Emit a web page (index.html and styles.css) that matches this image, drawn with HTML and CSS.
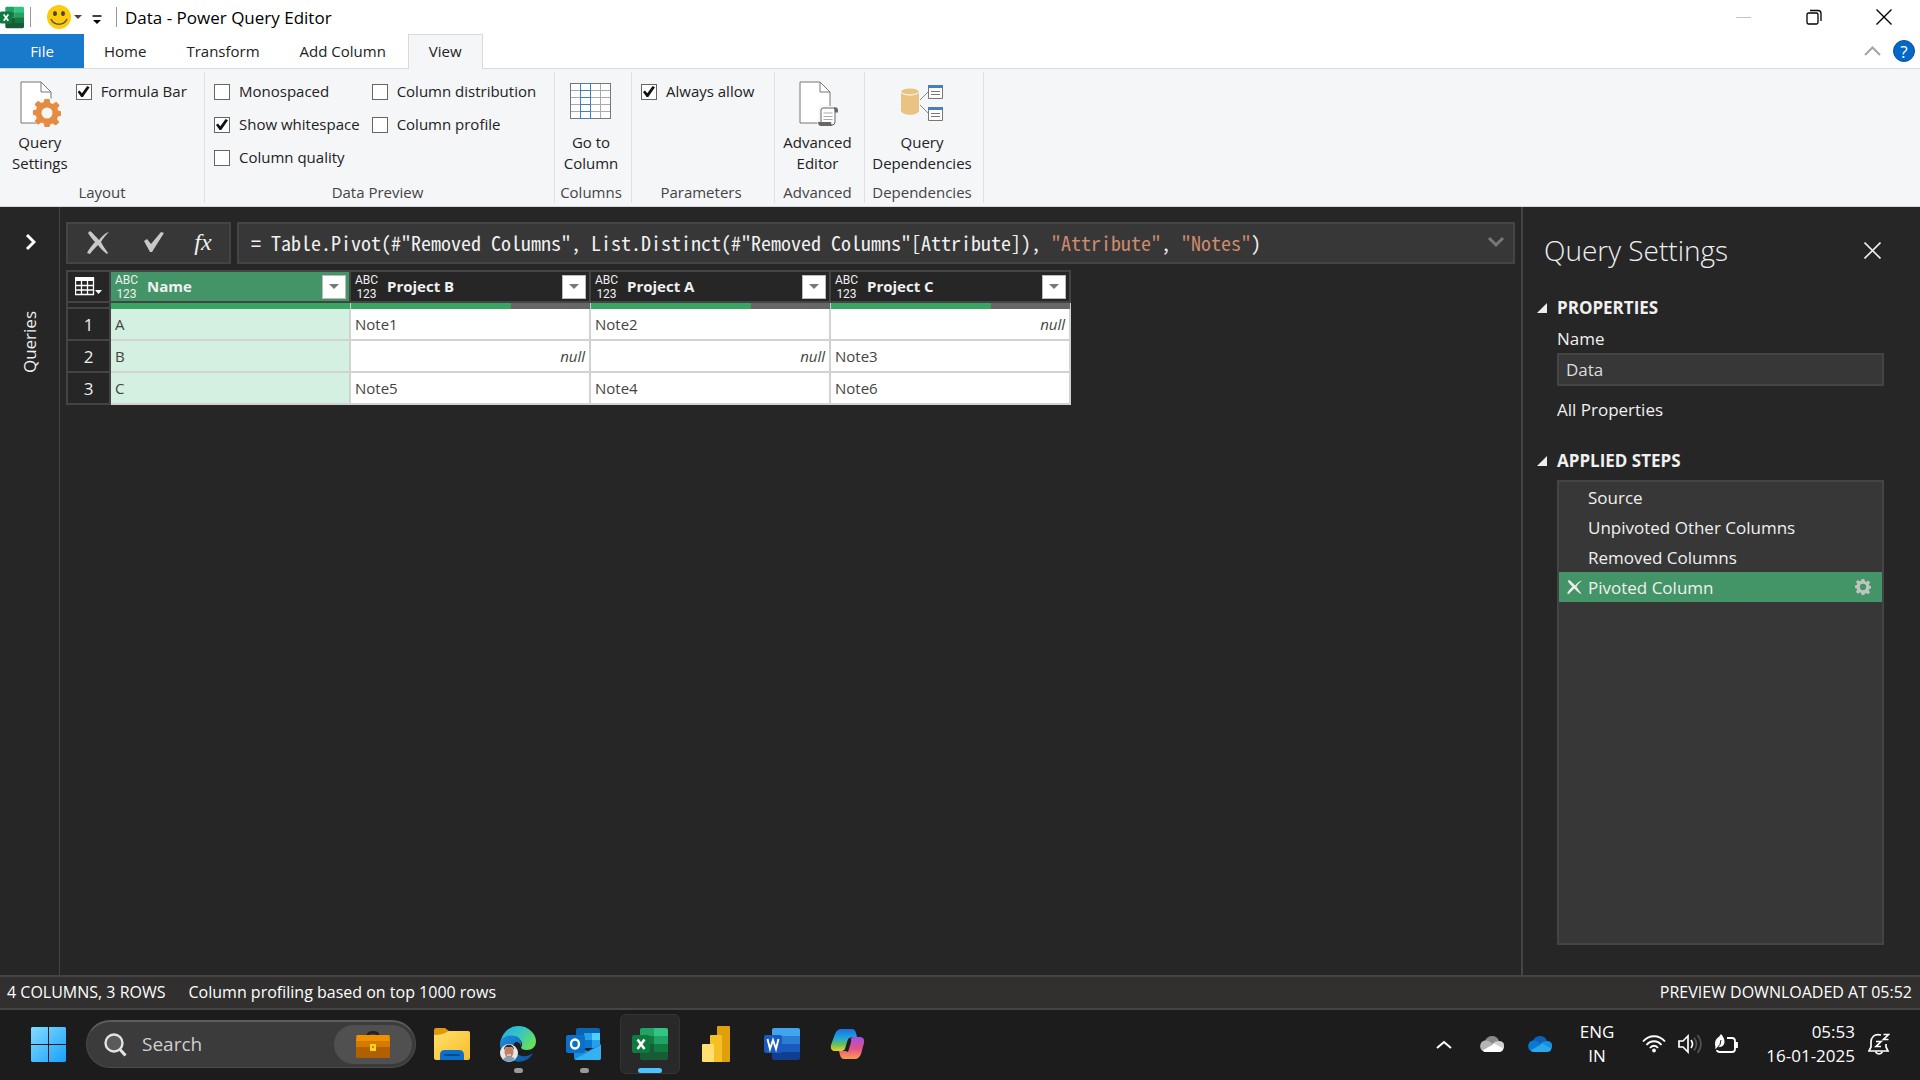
FILE: index.html
```html
<!DOCTYPE html>
<html lang="en">
<head>
  <meta charset="UTF-8">
  <meta name="viewport" content="width=device-width, initial-scale=1.0">
  <title>Data - Power Query Editor</title>
  <link rel="stylesheet" href="styles.css">
</head>
<body>
<!-- shared symbols -->
<svg class="defs" width="0" height="0" aria-hidden="true">
  <symbol id="excel" viewBox="0 0 36 34">
    <path fill="#21a366" d="M10 1h12v8H8V3q0-2 2-2z"/>
    <path fill="#33c481" d="M22 1h12q2 0 2 2v6H22z"/>
    <path fill="#107c41" d="M8 9h14v8H8z"/>
    <path fill="#21a366" d="M22 9h14v8H22z"/>
    <path fill="#185c37" d="M8 17h28v14q0 2-2 2H10q-2 0-2-2z"/>
    <path fill="#107c41" d="M22 17h14v8H22z"/>
    <rect x="0" y="8" width="18" height="18" rx="2" fill="#0f7a40"/>
    <path stroke="#fff" stroke-width="2.6" fill="none" d="M5.500 12.500l7 9.500M12.500 12.500l-7 9.500"/>
  </symbol>
  <symbol id="gear" viewBox="0 0 28 28">
    <path fill="currentColor" fill-rule="evenodd" d="M11.500 0h5l.8 4 2.500 1 3.400-2.300 3.400 3.500L24.400 9.500l1 2.300 2.600.500v4.500l-3 .700-1 2.400 2.300 3.300-3.500 3.400-3.200-2.200-2.400 1L16.500 28h-5l-.8-3.500-2.400-1-3.300 2.200-3.400-3.500 2.200-3.300-1-2.400L0 15.800v-4.500l3-.600 1-2.200L1.600 5.200 5 1.800 8.300 4l2.400-1zM14 8.500a5.500 5.500 0 1 0 0 11 5.500 5.500 0 0 0 0-11z"/>
  </symbol>
  <symbol id="cross" viewBox="0 0 16 16">
    <path stroke="currentColor" fill="none" d="M0.500 0.500l15 15M15.500 0.500l-15 15"/>
  </symbol>
  <symbol id="brush-cross" viewBox="0 0 22 23">
    <path fill="currentColor" d="M3 0c3 2 6 6 9 9 3-4 6-7 10-8-3 3-6 6-8 10 2 4 5 8 7 11l-1 1c-4-3-7-6-9-9-3 3-6 6-8 9l-3-1c2-4 5-8 8-11C5 8 3 5 1 2z"/>
  </symbol>
  <symbol id="cloud" viewBox="0 0 24 16">
    <path class="cloud-top" d="M5 5c2-6 12-7 14 0l-8 3z"/>
    <path class="cloud-left" d="M5 4.500c3 0 4 .500 8 3.500L3 15c-4-1-4-10 2-10.500z"/>
    <path class="cloud-right" d="M19 5c6 0 6 6 4 8l-11-5c2-2 4-3 7-3z"/>
    <path class="cloud-base" d="M2.500 14.500L14 7.500l9.500 5c-.5 2-2 3.500-4 3.500H6c-1.500 0-2.500-.5-3.500-1.500z"/>
  </symbol>
</svg>

<header class="titlebar">
  <svg class="app-icon" width="24" height="23"><use href="#excel"/></svg>
  <span class="divider"></span>
  <button class="smiley" aria-label="Send feedback">
    <svg width="36" height="24" viewBox="0 0 36 24">
      <circle cx="12" cy="12" r="12" fill="#fdcb0a"/>
      <ellipse cx="8" cy="8.500" rx="2" ry="2.500" fill="#444"/>
      <ellipse cx="16" cy="8.500" rx="2" ry="2.500" fill="#444"/>
      <path d="M4 14c3 7 13 7 16 0" fill="none" stroke="#555" stroke-width="1.500"/>
      <path d="M27 10h8l-4 4z" fill="#444"/>
    </svg>
  </button>
  <button class="customize" aria-label="Customize toolbar">
    <svg width="10" height="10" viewBox="0 0 10 10"><path d="M0.500 1h9" stroke="#000" stroke-width="1.500"/><path d="M1 5h8L5 9z"/></svg>
  </button>
  <span class="divider"></span>
  <span class="window-title">Data - Power Query Editor</span>
  <div class="window-buttons">
    <button aria-label="Minimize"><svg width="16" height="16"><path d="M0 8.500h15" stroke="#c4c4c4"/></svg></button>
    <button aria-label="Restore"><svg width="16" height="16" fill="none" stroke="#000" stroke-width="1.300"><rect x="1" y="4" width="11" height="11" rx="1.500"/><path d="M4 1.500h8q3 0 3 3V12"/></svg></button>
    <button aria-label="Close"><svg width="16" height="16" stroke-width="1.400"><use href="#cross"/></svg></button>
  </div>
</header>

<nav class="tabs">
  <button class="tab file">File</button>
  <button class="tab">Home</button>
  <button class="tab">Transform</button>
  <button class="tab">Add Column</button>
  <button class="tab active">View</button>
  <div class="tab-tools">
    <button aria-label="Collapse ribbon"><svg width="17" height="10"><path d="M1 9l7.500-7.500L16 9" fill="none" stroke="#a5a5a5" stroke-width="2"/></svg></button>
    <button class="help" aria-label="Help">?</button>
  </div>
</nav>

<section class="ribbon">
  <div class="group layout">
    <div class="group-body">
      <button class="big">
        <svg width="42" height="46" viewBox="0 0 42 46">
          <path d="M2 1h20l10 10v31H2z" fill="#fff" stroke="#777"/>
          <path d="M22 1v10h10" fill="none" stroke="#777"/>
          <circle cx="28" cy="32" r="15" fill="#f5f6f8"/>
          <svg x="14" y="18" width="28" height="28" color="#e58b42"><use href="#gear"/></svg>
          <circle cx="28" cy="32" r="5" fill="#f5f6f8"/>
        </svg>
        <span>Query<br>Settings</span>
      </button>
      <div class="checks">
        <label><input type="checkbox" checked>Formula Bar</label>
      </div>
    </div>
    <div class="group-name">Layout</div>
  </div>
  <div class="group preview">
    <div class="group-body">
      <div class="checks">
        <label><input type="checkbox">Monospaced</label>
        <label><input type="checkbox" checked>Show whitespace</label>
        <label><input type="checkbox">Column quality</label>
      </div>
      <div class="checks">
        <label><input type="checkbox">Column distribution</label>
        <label><input type="checkbox">Column profile</label>
      </div>
    </div>
    <div class="group-name">Data Preview</div>
  </div>
  <div class="group columns">
    <div class="group-body">
      <button class="big">
        <svg width="42" height="46" viewBox="0 0 42 46" fill="none">
          <rect x="0.500" y="2.500" width="40" height="35" fill="#fff"/>
          <path d="M1 9.500h39M1 16.500h39M1 23.500h39M1 30.500h39M30.500 3v34" stroke="#aaa"/>
          <rect x="0.500" y="2.500" width="40" height="35" stroke="#777"/>
          <path d="M10.500 2.500h10v35h-10zM11 9.500h9M11 16.500h9M11 23.500h9M11 30.500h9" stroke="#3f7fc4"/>
        </svg>
        <span>Go to<br>Column</span>
      </button>
    </div>
    <div class="group-name">Columns</div>
  </div>
  <div class="group parameters">
    <div class="group-body">
      <div class="checks">
        <label><input type="checkbox" checked>Always allow</label>
      </div>
    </div>
    <div class="group-name">Parameters</div>
  </div>
  <div class="group advanced">
    <div class="group-body">
      <button class="big">
        <svg width="42" height="46" viewBox="0 0 42 46">
          <path d="M4 1h20l10 10v31H4z" fill="#fff" stroke="#777"/>
          <path d="M24 1v10h10" fill="none" stroke="#777"/>
          <path d="M23 25h19v21H21z" fill="#f5f6f8"/>
          <path d="M27 27h12v14q0 3-3 3H25V29q0-2 2-2z" fill="#fff" stroke="#666"/>
          <path d="M38 26.500q5-1 4 5h-3z" fill="#666"/>
          <path d="M22 41h13q0 3 2 4H25q-3 0-3-4z" fill="#666"/>
          <path d="M27.500 32h9M27.500 35.500h9M27.500 38.500h9" stroke="#aaa"/>
        </svg>
        <span>Advanced<br>Editor</span>
      </button>
    </div>
    <div class="group-name">Advanced</div>
  </div>
  <div class="group dependencies">
    <div class="group-body">
      <button class="big">
        <svg width="42" height="46" viewBox="0 0 42 46">
          <path d="M0 11v19c2 5 16 5 18 0V11z" fill="#eac282"/>
          <ellipse cx="9" cy="11" rx="9" ry="3.500" fill="#eac282"/>
          <path d="M0 11c2 4 16 4 18 0" stroke="#fff" fill="none"/>
          <path d="M19 19l8-8M19 24l8 8" stroke="#888" fill="none"/>
          <path d="M27.500 5.500h14v12h-14zM27.500 27.500h14v12h-14z" fill="#fff" stroke="#777"/>
          <path d="M27 4h15v3H27zM27 26h15v3H27z" fill="#4a7ebb"/>
          <path d="M30 10.500h9M30 13.500h9M30 32.500h9M30 35.500h9" stroke="#777"/>
        </svg>
        <span>Query<br>Dependencies</span>
      </button>
    </div>
    <div class="group-name">Dependencies</div>
  </div>
</section>

<main class="workspace">
  <aside class="queries">
    <button class="expand" aria-label="Expand queries"><svg width="12" height="18"><path d="M3 2l7 7-7 7" fill="none" stroke="#fff" stroke-width="3"/></svg></button>
    <span class="queries-label">Queries</span>
  </aside>

  <section class="editor">
    <div class="formula-row">
      <div class="formula-buttons">
        <button aria-label="Cancel"><svg width="22" height="23" color="#c8c8c8"><use href="#brush-cross"/></svg></button>
        <button aria-label="Commit"><svg width="22" height="20" viewBox="0 0 22 20"><path d="M1 9l3-2 4 5L18 0l3 1-12 19H7z" fill="#c8c8c8"/></svg></button>
        <button class="fx" aria-label="Insert step">fx</button>
      </div>
      <div class="formula">
        <div class="formula-text" role="textbox" contenteditable="true" spellcheck="false" aria-label="Formula">= Table.Pivot(#"Removed Columns", List.Distinct(#"Removed Columns"[Attribute]), <span class="str">"Attribute"</span>, <span class="str">"Notes"</span>)</div>
        <button aria-label="Expand formula bar"><svg width="18" height="12"><path d="M2 2l7 7 7-7" fill="none" stroke="#777" stroke-width="3"/></svg></button>
      </div>
    </div>

    <table class="grid">
      <thead>
      <tr>
        <th class="corner">
          <button aria-label="Table options"><svg width="28" height="19" viewBox="0 0 28 19"><path d="M0.500 0.500h18v17H0.500zM0.500 8.500h18M0.500 13h18M6.500 4v13M12.500 4v13" fill="none" stroke="#fff" stroke-width="1.300"/><path d="M0 0h19v4H0zM20 13h7l-3.500 4z" fill="#fff"/></svg></button>
        </th>
        <th class="selected"><div class="col-head"><span class="type">ABC<br>123</span><span class="col-name">Name</span><button aria-label="Filter Name"></button></div></th>
        <th><div class="col-head"><span class="type">ABC<br>123</span><span class="col-name">Project B</span><button aria-label="Filter Project B"></button></div></th>
        <th><div class="col-head"><span class="type">ABC<br>123</span><span class="col-name">Project A</span><button aria-label="Filter Project A"></button></div></th>
        <th><div class="col-head"><span class="type">ABC<br>123</span><span class="col-name">Project C</span><button aria-label="Filter Project C"></button></div></th>
      </tr>
      <tr class="quality">
        <td></td>
        <td><div class="bar"><div style="width: 100%"></div></div></td>
        <td><div class="bar"><div style="width: 67%"></div></div></td>
        <td><div class="bar"><div style="width: 67%"></div></div></td>
        <td><div class="bar"><div style="width: 67%"></div></div></td>
      </tr>
      </thead>
      <tbody>
      <tr><th>1</th><td class="selected">A</td><td>Note1</td><td>Note2</td><td class="null">null</td></tr>
      <tr><th>2</th><td class="selected">B</td><td class="null">null</td><td class="null">null</td><td>Note3</td></tr>
      <tr><th>3</th><td class="selected">C</td><td>Note5</td><td>Note4</td><td>Note6</td></tr>
      </tbody>
    </table>
  </section>

  <aside class="settings">
    <div class="settings-head">
      <h1>Query Settings</h1>
      <button aria-label="Close settings"><svg width="17" height="17" viewBox="0 0 16 16" color="#eee" stroke-width="1.500"><use href="#cross"/></svg></button>
    </div>
    <h2>PROPERTIES</h2>
    <div class="properties">
      <label for="query-name">Name</label>
      <input type="text" id="query-name" value="Data">
      <a href="#">All Properties</a>
    </div>
    <h2>APPLIED STEPS</h2>
    <ul class="steps">
      <li>Source</li>
      <li>Unpivoted Other Columns</li>
      <li>Removed Columns</li>
      <li class="current">
        <button class="delete" aria-label="Delete step"><svg width="15" height="14" viewBox="0 0 22 23" preserveAspectRatio="none" color="#eee"><use href="#brush-cross"/></svg></button>
        Pivoted Column
        <button class="edit" aria-label="Edit step"><svg width="16" height="16" color="#c0c4c1"><use href="#gear"/></svg></button>
      </li>
    </ul>
  </aside>
</main>

<footer class="statusbar">
  <span>4 COLUMNS, 3 ROWS</span>
  <span>Column profiling based on top 1000 rows</span>
  <span class="right">PREVIEW DOWNLOADED AT 05:52</span>
</footer>

<div class="taskbar">
  <button class="start" aria-label="Start">
    <svg width="35" height="35" viewBox="0 0 35 35">
      <linearGradient id="win" x1="0" y1="0" x2="1" y2="1"><stop offset="0" stop-color="#83dcff"/><stop offset="1" stop-color="#18a0fb"/></linearGradient>
      <path fill="url(#win)" d="M1 0h16v17H0V1zM18 0h16l1 1v16H18zM0 18h17v17H1l-1-1zM18 18h17v16l-1 1H18z"/>
    </svg>
  </button>
  <div class="search">
    <svg width="23" height="24" viewBox="0 0 23 24" fill="#5a5a5a" stroke="#e4e4e4" stroke-width="2.400"><circle cx="10" cy="10" r="8.500"/><path d="M16 16.500l5.500 6" stroke-width="3"/></svg>
    <input type="text" placeholder="Search" aria-label="Search">
    <button aria-label="Search highlight">
      <svg width="34" height="28" viewBox="0 0 34 28">
        <path d="M12 5q0-3.500 5-3.500t5 3.500" fill="none" stroke="#222" stroke-width="3"/>
        <rect y="4" width="34" height="23" rx="1" fill="#b06000"/>
        <path d="M1 4h32l1 6v6H0v-6z" fill="#d27b00"/><path d="M1 4h32l1 6H0z" fill="#f09000"/>
        <rect x="14" y="13" width="6" height="7" fill="#ffd21c"/><rect x="16" y="15" width="2" height="2" fill="#c88500"/>
      </svg>
    </button>
  </div>
  <div class="apps">
    <button aria-label="File Explorer">
      <svg width="36" height="36" viewBox="0 0 36 36">
        <linearGradient id="fold" x1="0" y1="0" x2="1" y2="1"><stop offset="0" stop-color="#ffdf6e"/><stop offset="1" stop-color="#f7bd27"/></linearGradient>
        <path d="M0 4q0-2 2-2h9l4 3h19v6H0z" fill="#dd9a09"/>
        <path d="M0 9q9 0 13-3 1-1 3-1h18q2 0 2 2v25q0 2-2 2H2q-2 0-2-2z" fill="url(#fold)"/>
        <path d="M6 34v-5q0-5 5-5h14q5 0 5 5v5z" fill="#0c6fcb"/><path d="M11 29h14" stroke="#0a4b8c" stroke-width="2" stroke-linecap="round"/>
      </svg>
    </button>
    <button class="open" aria-label="Edge">
      <svg width="36" height="36" viewBox="0 0 36 36">
        <linearGradient id="edge1" x1="0" y1="0" x2="1" y2="0.600"><stop offset="0" stop-color="#25a9e0"/><stop offset="0.500" stop-color="#35c3c8"/><stop offset="1" stop-color="#66e05a"/></linearGradient>
        <linearGradient id="edge2" x1="0" y1="0" x2="1" y2="1"><stop offset="0" stop-color="#1b8fe0"/><stop offset="1" stop-color="#0d4f9a"/></linearGradient>
        <path d="M0 18C2 6 10 0 18 0c11 0 18 8 18 15 0 6-4 9-9 9-4 0-6-1-6-3 2-1 2-7-5-10C9 8 2 12 0 18z" fill="url(#edge1)"/>
        <path d="M0 18C1 11 8 8 15 10c6 1 7 7 6 10-1-3-3-4-5-4-5 2-3 12 6 14 4 1 8-1 11-3-4 8-12 10-19 8C5 33 0 26 0 18z" fill="url(#edge2)"/>
        <circle cx="9" cy="27" r="9" fill="#e9e7e4"/>
        <ellipse cx="9" cy="26" rx="4.500" ry="6" fill="#bd8268"/>
        <path d="M4 24c0-7 10-7 10 0l-2-3H6z" fill="#35251f"/>
        <path d="M3 33c2-3 10-3 12 0-3 3-9 4-12 0z" fill="#7ea0bd"/>
        <path d="M7 29h4" stroke="#fff"/>
      </svg>
    </button>
    <button class="open" aria-label="Outlook">
      <svg width="36" height="36" viewBox="0 0 36 36">
        <path d="M10 4q0-2 2-2h20q2 0 2 2v15H10z" fill="#0a64b4"/>
        <path d="M18 7h8v7h-8z" fill="#28a0e8"/><path d="M26 7h8v7h-8z" fill="#50d0ff"/><path d="M18 14h8v8h-8z" fill="#0a78d0"/><path d="M26 14h8v8h-8z" fill="#28a0e8"/>
        <path d="M8 20l14 5 13-7v14q0 2-2 2H10q-2 0-2-2z" fill="#1a8ce0"/><path d="M9 33l26-14v13q0 2-2 2H10z" fill="#35b1f0"/>
        <rect y="9" width="19" height="18" rx="2" fill="#0a70c8"/>
        <ellipse cx="9" cy="18" rx="4" ry="4.500" fill="none" stroke="#fff" stroke-width="2.400"/>
      </svg>
    </button>
    <button class="open active" aria-label="Excel"><svg width="36" height="34"><use href="#excel"/></svg></button>
    <button aria-label="Power BI">
      <svg width="36" height="36" viewBox="0 0 36 36">
        <path d="M19 1q0-1 1-1h11q1 0 1 1v34q0 1-1 1H19z" fill="#dfa00c"/>
        <path d="M12 10q0-1 1-1h10q1 0 1 1v26H12z" fill="#f4c024"/>
        <path d="M4 19q0-1 1-1h10q1 0 1 1v17H5q-1 0-1-1z" fill="#ffdf70"/>
      </svg>
    </button>
    <button aria-label="Word">
      <svg width="36" height="34" viewBox="0 0 36 34">
        <path d="M10 1h24q2 0 2 2v6H8V3q0-2 2-2z" fill="#41a5ee"/><path d="M8 9h28v8H8z" fill="#2b7cd3"/><path d="M8 17h28v8H8z" fill="#185abd"/><path d="M8 25h28v6q0 2-2 2H10q-2 0-2-2z" fill="#103f91"/>
        <rect y="8" width="18" height="18" rx="2" fill="#185abd"/>
        <path d="M3.500 12l2.500 10 3-9 3 9 2.500-10" fill="none" stroke="#fff" stroke-width="1.900"/>
      </svg>
    </button>
    <button aria-label="Copilot">
      <svg width="36" height="34" viewBox="0 0 36 34">
        <linearGradient id="cop1" x1="0" y1="0" x2="0" y2="1"><stop offset="0" stop-color="#1b6fe0"/><stop offset="0.400" stop-color="#21a4dc"/><stop offset="0.700" stop-color="#62bf60"/><stop offset="1" stop-color="#f0d020"/></linearGradient>
        <linearGradient id="cop2" x1="0" y1="0" x2="0" y2="1"><stop offset="0" stop-color="#a050e8"/><stop offset="0.500" stop-color="#e0508c"/><stop offset="1" stop-color="#ff9a50"/></linearGradient>
        <path d="M11 2h11q3 0 4 4l1 4h-4q-4 0-5 4l-2 7q-1 3-4 3H5q-5 0-4-6L5 7q2-5 6-5z" fill="url(#cop1)"/>
        <path d="M25 32H14q-3 0-4-4l-1-4h4q4 0 5-4l2-7q1-3 4-3h6q5 0 4 6l-3 11q-2 5-6 5z" fill="url(#cop2)"/>
        <path d="M19 11q-1 1-2 4l-2 7q-1 2-3 2h4l2 1 3-10q1-4-2-4z" fill="#1c1c1c"/>
      </svg>
    </button>
  </div>
  <div class="tray">
    <svg width="16" height="9"><path d="M1 8l7-6 7 6" fill="none" stroke="#fff" stroke-width="2"/></svg>
    <svg class="cloud gray" width="24" height="16"><use href="#cloud"/></svg>
    <svg class="cloud blue" width="24" height="16"><use href="#cloud"/></svg>
    <span class="lang">ENG<br>IN</span>
    <div class="tray-status">
      <svg width="24" height="18" viewBox="0 0 24 18" fill="none" stroke="#fff" stroke-width="1.800"><path d="M1 6.500C7-.5 17-.5 23 6.500M4.500 10c4-5 11-5 15 0M8 13c2-3 6-3 8 0"/><circle cx="12" cy="15.500" r="1.500" fill="#fff" stroke-width="1"/></svg>
      <svg width="24" height="20" viewBox="0 0 24 20" fill="none" stroke="#fff" stroke-width="1.700"><path d="M1 7h4l5-5v16l-5-5H1z"/><path d="M13 6q3 4 0 8"/><path d="M16 3.500q5 6.500 0 13M19.500 1q7 9 0 18" stroke="#555"/></svg>
      <svg width="24" height="20" viewBox="0 0 24 20" fill="none" stroke="#fff" stroke-width="1.800"><path d="M13 4h5q3 0 3 3v8q0 3-3 3H6q-3 0-3-2"/><path d="M21 9h2v4h-2z" fill="#fff"/><path d="M7 0c5 5 5 13-2 13-1 0-2 1-4 2 1-2 0-3 0-5 0-6 4-6 6-10z" fill="#fff" stroke="none"/><path d="M7 6q0 5-4 8" stroke="#1c1c1c" stroke-width="1"/></svg>
    </div>
    <span class="clock">05:53<br>16-01-2025</span>
    <svg width="22" height="23" viewBox="0 0 22 23" fill="none" stroke="#fff" stroke-width="1.700"><path d="M13 2C6 0 3 5 3 9v5l-2 4h19l-2-4v-3M7.500 19q3.500 4 7 0M8 8.500h5l-5 5h5M15.500 1.500h5l-5 5h5"/></svg>
  </div>
</div>
</body>
</html>
```
FILE: styles.css
```css
* {
  box-sizing: border-box;
}

body {
  margin: 0;
  min-height: 100vh;
  display: flex;
  flex-direction: column;
  background: #262626;
  color: #222;
  font-family: "Open Sans", "Noto Sans", sans-serif;
  font-size: 15px;
  line-height: 21px;
}

button, input {
  font: inherit;
  color: inherit;
}

button {
  display: flex;
  align-items: center;
  justify-content: center;
  padding: 0;
  border: 0;
  background: none;
}

svg {
  display: block;
  flex: none;
}

.defs {
  position: absolute;
}

/* title bar */
.titlebar {
  display: flex;
  align-items: center;
  height: 34px;
  background: #fff;
  color: #000;
}

.divider {
  width: 1px;
  height: 20px;
  background: #999;
}

.app-icon {
  margin-right: 6px;
}

.smiley {
  margin: 0 9px 0 16px;
}

.customize {
  margin-right: 14px;
  padding-top: 6px;
}

.window-title {
  margin-left: 8px;
  font-size: 17px;
}

.window-buttons {
  display: flex;
  margin-left: auto;
  padding-right: 1px;
}

.window-buttons button {
  width: 70px;
  height: 34px;
}

/* ribbon tabs */
.tabs {
  display: flex;
  height: 35px;
  background: #fff;
  border-bottom: 1px solid #dadada;
}

.tab {
  height: 34px;
  padding: 0 20px;
}

.tab.file {
  width: 84px;
  background: #1979ca;
  color: #fff;
}

.tab.active {
  height: 35px;
  margin-left: 2px;
  padding-bottom: 2px;
  border: 1px solid #dadada;
  border-bottom: 0;
  background: #f5f6f8;
}

.tab-tools {
  display: flex;
  align-items: center;
  gap: 12px;
  margin-left: auto;
  padding-right: 5px;
}

.help {
  width: 22px;
  height: 22px;
  border: 1px solid #0a4f96;
  border-radius: 50%;
  background: #0468c8;
  color: #fff;
  font-size: 17px;
}

/* ribbon */
.ribbon {
  display: flex;
  height: 138px;
  padding: 3px 0;
  background: #f5f6f8;
  border-bottom: 1px solid #d5d8da;
}

.group {
  display: flex;
  flex-direction: column;
  justify-content: space-between;
  padding-right: 4px;
  border-right: 1px solid #e0e1e3;
}

.group-body {
  display: flex;
  padding-top: 9px;
}

.group-name {
  color: #444;
  text-align: center;
}

.group.layout {
  width: 205px;
  padding-right: 0;
}

.group.preview {
  width: 350px;
}

.group.columns {
  width: 77px;
}

.group.parameters {
  width: 143px;
}

.group.advanced {
  width: 90px;
}

.group.dependencies {
  width: 119px;
}

.big {
  flex-direction: column;
  gap: 5px;
  margin: 0 auto;
}

.layout .big {
  margin: 0 8px 0 12px;
}

.checks {
  display: flex;
  flex-direction: column;
  gap: 12px;
  margin-right: 12px;
}

.preview .checks:first-child,
.parameters .checks {
  margin-left: 9px;
}

.checks label {
  display: flex;
  align-items: center;
  white-space: nowrap;
}

.checks input {
  appearance: none;
  width: 16px;
  height: 16px;
  margin: 0 9px 0 0;
  border: 1px solid #666;
  background: #fff;
}

.checks input:checked::after {
  content: "";
  display: block;
  width: 12px;
  height: 12px;
  margin: 1px;
  background: #111;
  clip-path: polygon(0 55%, 16% 42%, 36% 65%, 80% 4%, 100% 14%, 44% 96%, 30% 96%);
}

/* workspace */
.workspace {
  display: flex;
  flex: 1;
  color: #f0f0f0;
}

.queries {
  display: flex;
  flex-direction: column;
  align-items: center;
  gap: 60px;
  width: 60px;
  padding-top: 26px;
  border-right: 1px solid #444;
}

.queries-label {
  writing-mode: vertical-rl;
  transform: rotate(180deg);
  font-size: 17px;
}

.editor {
  flex: 1;
  padding: 15px 6px 0;
}

.formula-row {
  display: flex;
  gap: 6px;
  height: 42px;
  margin-bottom: 6px;
}

.formula-buttons,
.formula {
  display: flex;
  align-items: center;
  border: 2px solid #444;
  background: #373737;
}

.formula-buttons {
  width: 165px;
  padding: 0 2px 2px;
}

.formula-buttons button {
  width: 56px;
}

.formula-buttons .fx {
  width: 42px;
  font-family: "Liberation Serif", serif;
  font-size: 24px;
  font-style: italic;
}

.formula {
  flex: 1;
  justify-content: space-between;
  padding: 0 8px 2px 12px;
}

.formula-text {
  font-family: "Noto Sans Mono CJK SC", "Liberation Mono", monospace;
  font-size: 20px;
  outline: 0;
  white-space: pre;
}

.str {
  color: #ce8a6e;
}

/* data grid */
.grid {
  table-layout: fixed;
  width: 1005px;
  border-collapse: separate;
  border-spacing: 0;
  border: solid #444;
  border-width: 2px 0 0 2px;
}

.grid th,
.grid td {
  width: 240px;
  padding: 0;
}

.grid thead th {
  height: 31px;
  border-right: 2px solid #444;
  border-bottom: 2px solid #444;
}

.grid thead th.corner,
.grid tbody th {
  width: 43px;
}

.grid thead .selected {
  background: #439467;
}

.corner button {
  margin: 0 auto;
}

.col-head {
  display: flex;
  align-items: center;
  padding: 0 3px 0 4px;
}

.type {
  width: 23px;
  font-family: Roboto, sans-serif;
  font-size: 12px;
  font-weight: 400;
  line-height: 14px;
}

.col-name {
  flex: 1;
  margin-left: 9px;
  text-align: left;
}

.col-head button {
  width: 24px;
  height: 24px;
  border: 1px solid #bbb;
  background: #fff;
}

.col-head button::after {
  content: "";
  border: 5px solid transparent;
  border-top-color: #777;
  border-bottom: 0;
}

.quality td {
  height: 6px;
  border-right: 1px solid #ccc;
}

.quality td:first-child {
  border-right: 2px solid #444;
  border-bottom: 2px solid #444;
}

.bar {
  height: 6px;
  background: #666;
}

.bar div {
  height: 6px;
  background: #38a562;
}

.grid tbody th {
  height: 32px;
  border-right: 2px solid #444;
  border-bottom: 2px solid #444;
  font-size: 17px;
  font-weight: 400;
}

.grid tbody td {
  padding: 0 4px;
  border-right: 2px solid #d2d2d2;
  border-bottom: 2px solid #d2d2d2;
  background: #fff;
  color: #444;
}

.grid tbody td.selected {
  background: #d4f0e0;
}

.grid tbody td.null {
  font-style: italic;
  text-align: right;
}

/* query settings */
.settings {
  display: flex;
  flex-direction: column;
  width: 399px;
  padding: 23px 36px 30px 14px;
  border-left: 2px solid #444;
  font-size: 17px;
}

.settings-head {
  display: flex;
  align-items: center;
  justify-content: space-between;
  padding: 0 3px 0 7px;
}

h1 {
  margin: 0;
  font-size: 28px;
  font-weight: 300;
  line-height: 40px;
}

h2 {
  display: flex;
  align-items: center;
  gap: 10px;
  margin: 28px 0 0;
  font-size: 17px;
  line-height: 20px;
}

h2::before {
  content: "";
  width: 10px;
  height: 10px;
  background: #eee;
  clip-path: polygon(100% 0, 100% 100%, 0 100%);
}

.properties {
  display: flex;
  flex-direction: column;
  margin: 10px 0 3px 20px;
}

.properties input {
  height: 33px;
  margin: 4px 0 13px;
  padding: 0 7px;
  border: 2px solid #444;
  background: #373737;
  color: #ddd;
}

.properties a {
  color: inherit;
  text-decoration: none;
}

.steps {
  flex: 1;
  margin: 9px 0 0 20px;
  padding: 0;
  border: 2px solid #444;
  background: #373737;
  list-style: none;
}

.steps li {
  display: flex;
  align-items: center;
  height: 30px;
  padding-left: 29px;
}

.steps .current {
  padding-left: 8px;
  background: #439467;
}

.delete {
  margin-right: 6px;
}

.edit {
  margin-left: auto;
  margin-right: 11px;
}

/* status bar */
.statusbar {
  display: flex;
  align-items: center;
  gap: 23px;
  height: 35px;
  padding: 0 8px 0 7px;
  border: solid #444;
  border-width: 2px 0;
  background: #31302f;
  color: #fff;
  font-size: 16px;
}

.statusbar .right {
  margin-left: auto;
}

/* taskbar */
.taskbar {
  display: flex;
  align-items: center;
  height: 70px;
  padding: 0 0 2px 31px;
  background: #1c1c1c;
  color: #fff;
  font-size: 17px;
}

.search {
  display: flex;
  align-items: center;
  width: 330px;
  height: 48px;
  margin: 0 6px 0 20px;
  padding: 0 3px 0 17px;
  border: 1px solid #4a4a4a;
  border-top: 2px solid #5c5c5c;
  border-radius: 24px;
  background: #3b3b3b;
}

.search input {
  flex: 1;
  min-width: 0;
  margin-left: 15px;
  padding: 0;
  border: 0;
  background: none;
  font-size: 19px;
}

.search input::placeholder {
  color: #cfcfcf;
}

.search button {
  width: 78px;
  height: 39px;
  border-radius: 20px;
  background: #505050;
}

.apps {
  display: flex;
  gap: 6px;
}

.apps button {
  position: relative;
  width: 60px;
  height: 60px;
  border-radius: 6px;
}

.apps .active {
  border: 1px solid #343434;
  background: #292929;
}

/* running indicator */
.apps .open::after {
  content: "";
  position: absolute;
  bottom: 1px;
  width: 9px;
  height: 5px;
  border-radius: 3px;
  background: #999;
}

.apps .active::after {
  bottom: 0;
  width: 24px;
  background: #4cc2ff;
}

.tray {
  display: flex;
  align-items: center;
  margin-left: auto;
  padding-right: 30px;
  line-height: 24px;
}

.cloud {
  margin-left: 24px;
}

.cloud.gray {
  margin-left: 28px;
}

.gray {
  --top: #8a8a8a;
  --left: #b5b5b5;
  --right: #d0d0d0;
  --base: #fff;
}

.blue {
  --top: #0b62b8;
  --left: #0d78d4;
  --right: #1590e0;
  --base: #2aa9ee;
}

.cloud-top {
  fill: var(--top);
}

.cloud-left {
  fill: var(--left);
}

.cloud-right {
  fill: var(--right);
}

.cloud-base {
  fill: var(--base);
}

.lang {
  margin: 0 28px;
  text-align: center;
}

.tray-status {
  display: flex;
  align-items: center;
  gap: 12px;
}

.clock {
  margin: 0 13px 0 28px;
  text-align: right;
}
```
